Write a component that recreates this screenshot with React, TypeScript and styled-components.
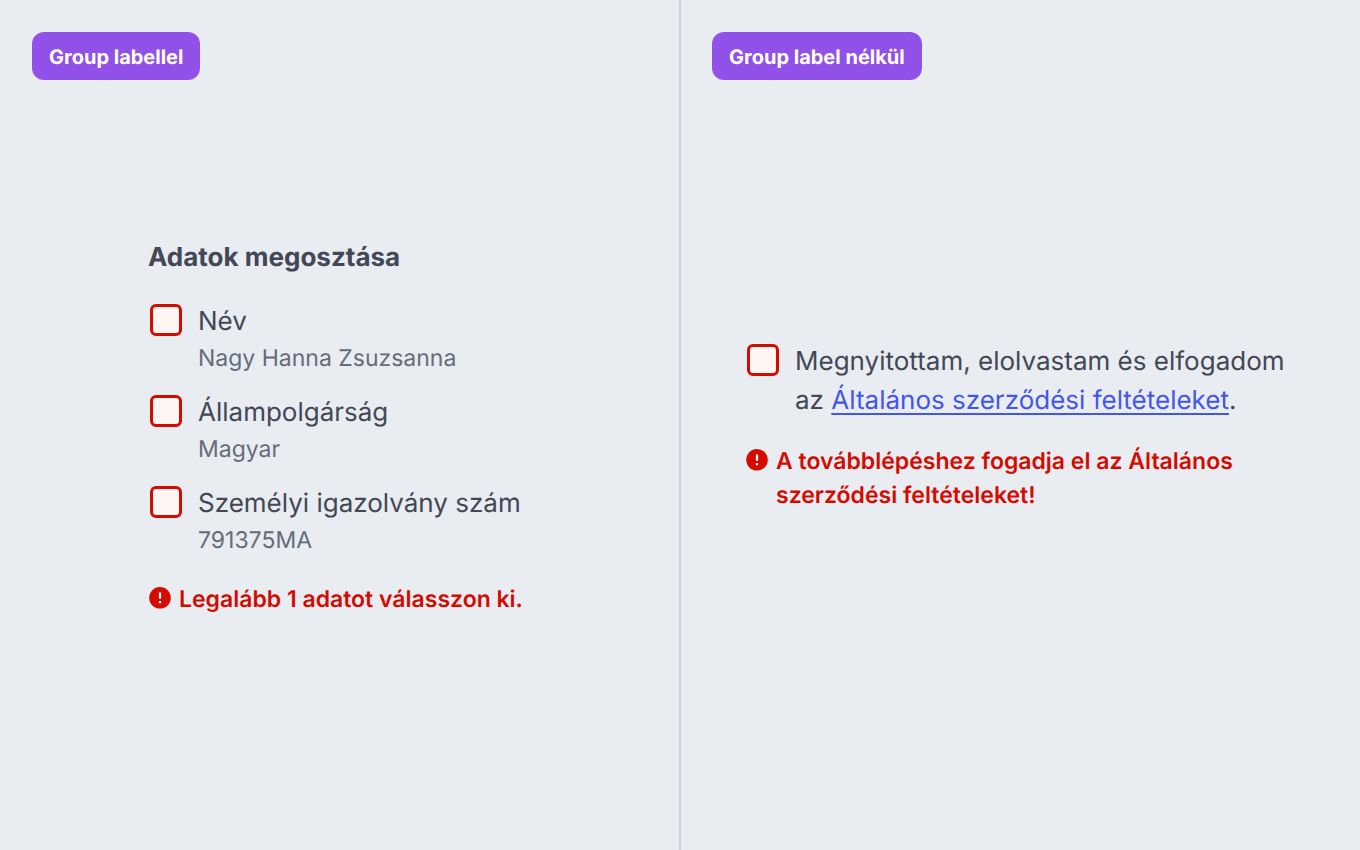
import React, { useId } from "react";
import styled, { createGlobalStyle } from "styled-components";

const GlobalStyle = createGlobalStyle`
  *, *::before, *::after { box-sizing: border-box; }
  body {
    margin: 0;
    background: #e9ecf1;
    color: #424856;
    font-family: Inter, "Liberation Sans", sans-serif;
    text-rendering: geometricPrecision;
  }
`;

const Page = styled.main`
  display: grid;
  grid-template-columns: 1fr 2px 1fr;
  min-height: 100vh;
`;

const Divider = styled.div`
  background: #cdd2d9;
`;

const Panel = styled.section`
  display: flex;
  flex-direction: column;
  align-items: flex-start;
  padding: 32px;

  &:last-child {
    padding-left: 31px;
  }
`;

const Tag = styled.h2`
  margin: 0;
  padding: 9px 17px 7px;
  border-radius: 12px;
  background: #9150e8;
  color: #ffffff;
  font-size: 20px;
  line-height: 32px;
  font-weight: 700;
`;

const Stage = styled.div<{ $inset: number; $top: number }>`
  align-self: stretch;
  padding: ${(p) => p.$top}px 0 0 ${(p) => p.$inset}px;
`;

const Group = styled.fieldset`
  margin: 0;
  padding: 0;
  border: 0;
`;

const Legend = styled.legend`
  margin-bottom: 23px;
  padding: 0;
  font-size: 26px;
  line-height: 42px;
  font-weight: 700;
`;

const Options = styled.div`
  display: flex;
  flex-direction: column;
  gap: 17px;
`;

const Option = styled.div`
  display: flex;
  align-items: flex-start;
  gap: 16px;
  padding-left: 2px;
`;

const Checkbox = styled.input`
  appearance: none;
  flex: none;
  width: 32px;
  height: 32px;
  margin: 2px 0 0;
  border: 3px solid #d30b00;
  border-radius: 6px;
  background: #fff5f3;

  &:checked {
    background: #d30b00;
  }
`;

const OptionLabel = styled.label`
  display: block;
  font-size: 26px;
  line-height: 39px;
`;

const Hint = styled.p`
  margin: 0;
  color: #656d7b;
  font-size: 23px;
  line-height: 35px;
`;

const TermsLink = styled.a`
  color: #4356ea;
  text-decoration: underline;
  text-decoration-thickness: 2px;
  text-underline-offset: 4px;
  text-decoration-skip-ink: none;
`;

const ErrorLine = styled.p`
  display: flex;
  align-items: flex-start;
  gap: 8px;
  max-width: 500px;
  margin: 24px 0 0;
  color: #d30b00;
  font-size: 23px;
  line-height: 34px;
  font-weight: 600;
`;

const ErrorGlyph = styled.svg`
  flex: none;
  width: 22px;
  height: 22px;
  margin: 5px 0 0 1px;
`;

function ErrorMessage({ id, children }: { id: string; children: React.ReactNode }) {
  return (
    <ErrorLine id={id} role="alert">
      <ErrorGlyph viewBox="0 0 22 22" aria-hidden="true">
        <circle cx="11" cy="10.8" r="10.8" fill="currentColor" />
        <path d="M11 5.4v6.4M11 14v2.2" stroke="#fff" strokeWidth="2.2" />
      </ErrorGlyph>
      <span>{children}</span>
    </ErrorLine>
  );
}

function Choice({ label, hint, errorId }: { label: React.ReactNode; hint?: string; errorId: string }) {
  const id = useId();
  return (
    <Option>
      <Checkbox type="checkbox" id={id} aria-invalid="true" aria-describedby={errorId} />
      <div>
        <OptionLabel htmlFor={id}>{label}</OptionLabel>
        {hint && <Hint>{hint}</Hint>}
      </div>
    </Option>
  );
}

export default function App() {
  return (
    <>
      <GlobalStyle />
      <Page lang="hu">
        <Panel>
          <Tag>Group labellel</Tag>
          <Stage $inset={116} $top={157}>
            <Group>
              <Legend>Adatok megosztása</Legend>
              <Options>
                <Choice label="Név" hint="Nagy Hanna Zsuzsanna" errorId="share-error" />
                <Choice label="Állampolgárság" hint="Magyar" errorId="share-error" />
                <Choice label="Személyi igazolvány szám" hint="791375MA" errorId="share-error" />
              </Options>
            </Group>
            <ErrorMessage id="share-error">Legalább 1 adatot válasszon ki.</ErrorMessage>
          </Stage>
        </Panel>
        <Divider />
        <Panel>
          <Tag>Group label nélkül</Tag>
          <Stage $inset={33} $top={262}>
            <Choice
              errorId="terms-error"
              label={
                <>
                  Megnyitottam, elolvastam és elfogadom
                  <br />
                  az <TermsLink href="#aszf">Általános szerződési feltételeket</TermsLink>.
                </>
              }
            />
            <ErrorMessage id="terms-error">
              A továbblépéshez fogadja el az Általános szerződési feltételeket!
            </ErrorMessage>
          </Stage>
        </Panel>
      </Page>
    </>
  );
}
